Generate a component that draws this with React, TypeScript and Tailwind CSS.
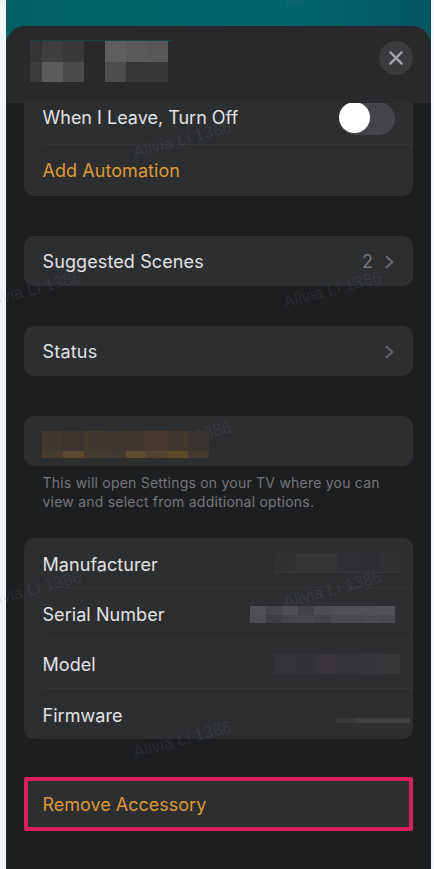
import type { ReactNode } from "react";

const WATERMARKS = [
  { left: -17, top: -21 },
  { left: 283, top: -21 },
  { left: 132, top: 130 },
  { left: -18, top: 280 },
  { left: 282, top: 280 },
  { left: 132, top: 430 },
  { left: -18, top: 580 },
  { left: 282, top: 580 },
  { left: 132, top: 730 },
];

function Chevron() {
  return (
    <svg className="h-[14px] w-[9px]" viewBox="0 0 9 14" fill="none" aria-hidden="true">
      <path d="M1.7 1.8 7.3 7l-5.6 5.2" stroke="#656569" strokeWidth="2.3" strokeLinecap="round" strokeLinejoin="round" />
    </svg>
  );
}

/** Rounded settings group */
function Card({ children, className = "" }: { children?: ReactNode; className?: string }) {
  return <section className={`rounded-[10px] bg-[#2d2e30] ${className}`}>{children}</section>;
}

/** Row of blocks hiding a private value */
function Pixels({ colors, className }: { colors: string[]; className: string }) {
  return (
    <div className={`relative z-10 flex ${className}`}>
      {colors.map((color, i) => (
        <span key={i} className="h-full flex-1" style={{ backgroundColor: color }} />
      ))}
    </div>
  );
}

function DetailRow({ label, last, children }: { label: ReactNode; last?: boolean; children: ReactNode }) {
  return (
    <div className="pl-[18.5px]">
      <div className={`flex h-[50.25px] items-center justify-between ${last ? "" : "border-b border-[#343537]"}`}>
        <span className="pt-1">{label}</span>
        {children}
      </div>
    </div>
  );
}

function Header() {
  return (
    <header className="flex h-[77px] items-start justify-between bg-[#29292b] pt-[14px] pr-[18px] pl-6">
      <div className="flex border-t border-[#174448]">
        <div>
          <div className="flex h-[21px]">
            <span className="w-3 bg-[#343436]" />
            <span className="w-[21px] bg-[#3e3e40]" />
            <span className="w-[21px] bg-[#39393b]" />
          </div>
          <div className="flex h-5">
            <span className="w-3 bg-[#3c3c3e]" />
            <span className="w-[21px] bg-[#5b5c5b]" />
            <span className="w-[21px] bg-[#4a4b49]" />
          </div>
        </div>
        <div className="mr-1 ml-[21px]">
          <div className="flex h-[21px]">
            <span className="w-[21px] bg-[#5f5f61]" />
            <span className="w-[21px] bg-[#5a5a5c]" />
            <span className="w-[21px] bg-[#58585a]" />
          </div>
          <div className="flex h-5">
            <span className="w-[21px] bg-[#4e4e50]" />
            <span className="w-[42px] bg-[#363638]" />
          </div>
        </div>
      </div>
      <button className="mt-px flex size-[34px] items-center justify-center rounded-full bg-[#3b3b3e]" aria-label="Close">
        <svg className="size-[14px]" viewBox="0 0 14 14" fill="none" aria-hidden="true">
          <path d="m1.4 1.4 11.2 11.2M12.6 1.4 1.4 12.6" stroke="#a4a4a9" strokeWidth="2.3" strokeLinecap="round" />
        </svg>
      </button>
    </header>
  );
}

export default function App() {
  return (
    <div className="relative h-[869px] w-[434px] overflow-hidden bg-[#f3f6f8] pr-[3px] pl-[6px] font-['Inter',sans-serif] text-[18px] leading-[22px] tracking-[0.06px] text-[#e3e3e5]">
      <div className="h-full bg-[linear-gradient(90deg,#036064_0%,#036568_35%,#03666a_65%,#045760_100%)] pt-[26px]">
        <main className="h-[843px] overflow-hidden rounded-t-[20px] bg-[#1d1e20]">
          <Header />

          <div className="px-[18px]">
            {/* scrolled partly under the header */}
            <Card className="h-[93px] overflow-hidden rounded-t-none">
              <div className="flex h-[41px] items-start justify-between pr-[18px] pl-[18.5px]">
                <span className="pt-1 tracking-normal">When I Leave, Turn Off</span>
                <div className="-mt-px h-[33px] w-[56px] rounded-full bg-[#454549]">
                  <div className="size-[31px] rounded-full bg-white" />
                </div>
              </div>
              <div className="ml-[18.5px] flex h-[52px] items-center border-t border-[#343537] text-[#dd9a37]">
                Add Automation
              </div>
            </Card>

            <Card className="mt-[40px] flex h-[50px] items-center justify-between pt-px pr-[19px] pl-[18.5px]">
              <span className="tracking-[0.11px]">Suggested Scenes</span>
              <span className="flex items-center gap-3 text-[#77777b]">
                2
                <Chevron />
              </span>
            </Card>

            <Card className="mt-[40px] flex h-[50px] items-center justify-between pt-px pr-[19px] pl-[18.5px]">
              <span className="tracking-[0.2px]">Status</span>
              <Chevron />
            </Card>

            <Card className="mt-[40px] h-[50px] pt-[15px] pl-[18px]">
              <Pixels
                className="h-5 w-[167px]"
                colors={["#42382f", "#3d3430", "#42392f", "#3f3730", "#43382e", "#49392d", "#43372e", "#3a3431"]}
              />
              <Pixels
                className="h-[7px] w-[167px]"
                colors={["#493c2f", "#5e4930", "#473b2f", "#443a30", "#604a31", "#544230", "#60482d", "#44392f"]}
              />
            </Card>
            <p className="mt-[8px] pl-[18.5px] text-[14px] leading-[18.5px] tracking-[0.22px] text-[#77777b]">
              This will open Settings on your TV where you can
              <br />
              view and select from additional options.
            </p>

            <Card className="mt-[27px] h-[201px]">
              <DetailRow label="Manufacturer">
                <Pixels
                  className="mr-[13px] h-5 w-[126px] border-b border-[#38393b]"
                  colors={["#303133", "#333436", "#343537", "#2f3035", "#2e2f32", "#303133"]}
                />
              </DetailRow>
              <DetailRow label="Serial Number">
                <div className="mt-[3px] mr-[18px]">
                  <Pixels
                    className="h-[9px] w-[145px]"
                    colors={["#515056", "#47464c", "#4f4e54", "#424147", "#4d4c52", "#504f55", "#514f56", "#504f55", "#525157"]}
                  />
                  <Pixels
                    className="h-2 w-[145px]"
                    colors={["#4d4c52", "#3e3d43", "#454449", "#47464c", "#434248", "#4b4950", "#4a494f", "#4c4b51", "#4a494f"]}
                  />
                </div>
              </DetailRow>
              <DetailRow label="Model">
                <Pixels
                  className="mt-[2px] mr-[13px] h-5 w-[126px]"
                  colors={["#333338", "#333337", "#383439", "#333339", "#343538", "#363638"]}
                />
              </DetailRow>
              <DetailRow label="Firmware" last>
                <div className="mt-[13px] mr-[3px] flex h-[5px]">
                  <span className="w-[21px] bg-[#38393b]" />
                  <span className="w-[53px] bg-[#404143]" />
                </div>
              </DetailRow>
            </Card>

            <button className="mt-[38px] flex h-[54px] w-full items-center rounded-[2px] border-4 border-[#da1f60] bg-[#2d2e30] pt-[2px] pl-[14.5px] tracking-normal text-[#dd9a37]">
              Remove Accessory
            </button>
          </div>
        </main>
      </div>

      {WATERMARKS.map(({ left, top }) => (
        <span
          key={`${left}-${top}`}
          className="pointer-events-none absolute w-[101px] -rotate-[15deg] font-['Liberation_Sans',sans-serif] text-[17px] leading-[20px] tracking-normal whitespace-nowrap text-[#8c8c90]/15"
          style={{ left, top }}
        >
          Alivia Li 1386
        </span>
      ))}
    </div>
  );
}
